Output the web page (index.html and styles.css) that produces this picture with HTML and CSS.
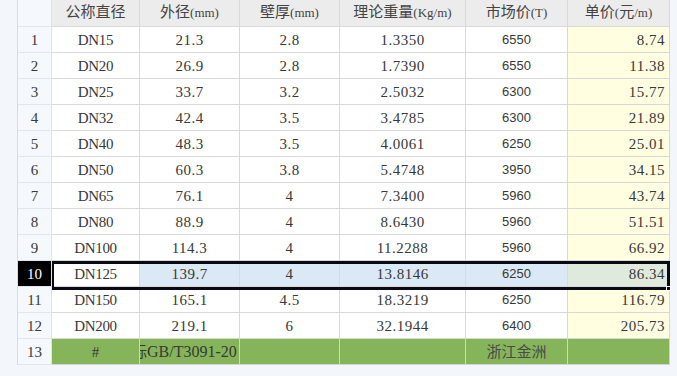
FILE: index.html
```html
<!DOCTYPE html>
<html lang="zh">
<head>
<meta charset="utf-8">
<title>钢管价格表</title>
<link rel="stylesheet" href="styles.css">
</head>
<body>
<div class="sheet">
  <div class="row head">
    <div class="rh corner"></div>
    <div class="c"><span class="cjk">公称直径</span></div>
    <div class="c"><span class="cjk">外径</span>(mm)</div>
    <div class="c"><span class="cjk">壁厚</span>(mm)</div>
    <div class="c"><span class="cjk">理论重量</span>(Kg/m)</div>
    <div class="c"><span class="cjk">市场价</span>(T)</div>
    <div class="c"><span class="cjk">单价</span>(<span class="cjk">元</span>/m)</div>
  </div>
  <div class="row"><div class="rh">1</div><div class="c dn">DN15</div><div class="c num">21.3</div><div class="c num">2.8</div><div class="c num">1.3350</div><div class="c sans">6550</div><div class="c num price">8.74</div></div>
  <div class="row"><div class="rh">2</div><div class="c dn">DN20</div><div class="c num">26.9</div><div class="c num">2.8</div><div class="c num">1.7390</div><div class="c sans">6550</div><div class="c num price">11.38</div></div>
  <div class="row"><div class="rh">3</div><div class="c dn">DN25</div><div class="c num">33.7</div><div class="c num">3.2</div><div class="c num">2.5032</div><div class="c sans">6300</div><div class="c num price">15.77</div></div>
  <div class="row"><div class="rh">4</div><div class="c dn">DN32</div><div class="c num">42.4</div><div class="c num">3.5</div><div class="c num">3.4785</div><div class="c sans">6300</div><div class="c num price">21.89</div></div>
  <div class="row"><div class="rh">5</div><div class="c dn">DN40</div><div class="c num">48.3</div><div class="c num">3.5</div><div class="c num">4.0061</div><div class="c sans">6250</div><div class="c num price">25.01</div></div>
  <div class="row"><div class="rh">6</div><div class="c dn">DN50</div><div class="c num">60.3</div><div class="c num">3.8</div><div class="c num">5.4748</div><div class="c sans">3950</div><div class="c num price">34.15</div></div>
  <div class="row"><div class="rh">7</div><div class="c dn">DN65</div><div class="c num">76.1</div><div class="c num">4</div><div class="c num">7.3400</div><div class="c sans">5960</div><div class="c num price">43.74</div></div>
  <div class="row"><div class="rh">8</div><div class="c dn">DN80</div><div class="c num">88.9</div><div class="c num">4</div><div class="c num">8.6430</div><div class="c sans">5960</div><div class="c num price">51.51</div></div>
  <div class="row"><div class="rh">9</div><div class="c dn">DN100</div><div class="c num">114.3</div><div class="c num">4</div><div class="c num">11.2288</div><div class="c sans">5960</div><div class="c num price">66.92</div></div>
  <div class="row sel"><div class="rh">10</div><div class="c dn active">DN125</div><div class="c num">139.7</div><div class="c num">4</div><div class="c num">13.8146</div><div class="c sans">6250</div><div class="c num price">86.34</div></div>
  <div class="row"><div class="rh">11</div><div class="c dn">DN150</div><div class="c num">165.1</div><div class="c num">4.5</div><div class="c num">18.3219</div><div class="c sans">6250</div><div class="c num price">116.79</div></div>
  <div class="row"><div class="rh">12</div><div class="c dn">DN200</div><div class="c num">219.1</div><div class="c num">6</div><div class="c num">32.1944</div><div class="c sans">6400</div><div class="c num price">205.73</div></div>
  <div class="row foot"><div class="rh">13</div><div class="c">#</div><div class="c std"><span class="clip"><span class="cjk">标</span>GB/T3091-20</span></div><div class="c"></div><div class="c"></div><div class="c"><span class="cjk brand">浙江金洲</span></div><div class="c"></div></div>
  <div class="selbox"><span class="handle"></span></div>
</div>
</body>
</html>
```

FILE: styles.css
```css
* { box-sizing: border-box; }
html, body { margin: 0; padding: 0; }
body {
  background: #f3f6fb;
  width: 677px;
  height: 376px;
  overflow: hidden;
}
.sheet {
  position: relative;
  margin-left: 17px;
  width: 653px;
  border-left: 1px solid #d6dce4;
}
.row {
  display: grid;
  grid-template-columns: 34px 88px 100px 100px 126px 102px 102px;
  height: 26px;
}
.row.head { height: 27px; }
.rh, .c {
  display: block;
  text-align: center;
  line-height: 26px;
  border-right: 1px solid #d9d9d9;
  border-bottom: 1px solid #d9d9d9;
  font-family: "Liberation Serif", "Noto Sans CJK SC", serif;
  font-size: 15px;
  color: #383838;
  white-space: nowrap;
  overflow: hidden;
  background: #fff;
}
.num { letter-spacing: 0.5px; }
.dn { letter-spacing: -0.3px; }
.rh {
  background: #f5f8fc;
  border-right-color: #dde2e8;
  border-bottom-color: #e2e6ec;
  color: #3a3a3a;
}
.head .c {
  background: #ececec;
  color: #444;
  font-size: 13px;
}
.head .corner { background: #f5f8fc; }
.cjk {
  font-family: "Noto Sans CJK SC", sans-serif;
  font-size: 15px;
  font-weight: 400;
  line-height: 1;
}
.sans {
  font-family: "Liberation Sans", sans-serif;
  font-size: 13px;
}
.price {
  text-align: right;
  padding-right: 4px;
  background: #fffee1;
}
.sel .rh {
  background: #000;
  color: #fff;
}
.sel .c { background: #dbe9f6; }
.sel .c.active { background: #fff; }
.sel .c.price { background: #dfeadc; }
.foot .c {
  background: #86b45a;
  border-right-color: #cfd6c8;
  border-bottom-color: #d0d4d8;
}
.foot .c.std { text-align: left; }
.clip {
  display: inline-block;
  margin-left: -8px;
  font-size: 16px;
}
.brand { color: #4a4a4a; }
.selbox {
  position: absolute;
  left: 34px;
  top: 261px;
  width: 618px;
  height: 29px;
  border: 3px solid #0a0a14;
  border-left-width: 2px;
  pointer-events: none;
}
.handle {
  position: absolute;
  right: -4px;
  bottom: -4px;
  width: 5px;
  height: 5px;
  background: #0a0a14;
  border: 1px solid #fff;
}
```
